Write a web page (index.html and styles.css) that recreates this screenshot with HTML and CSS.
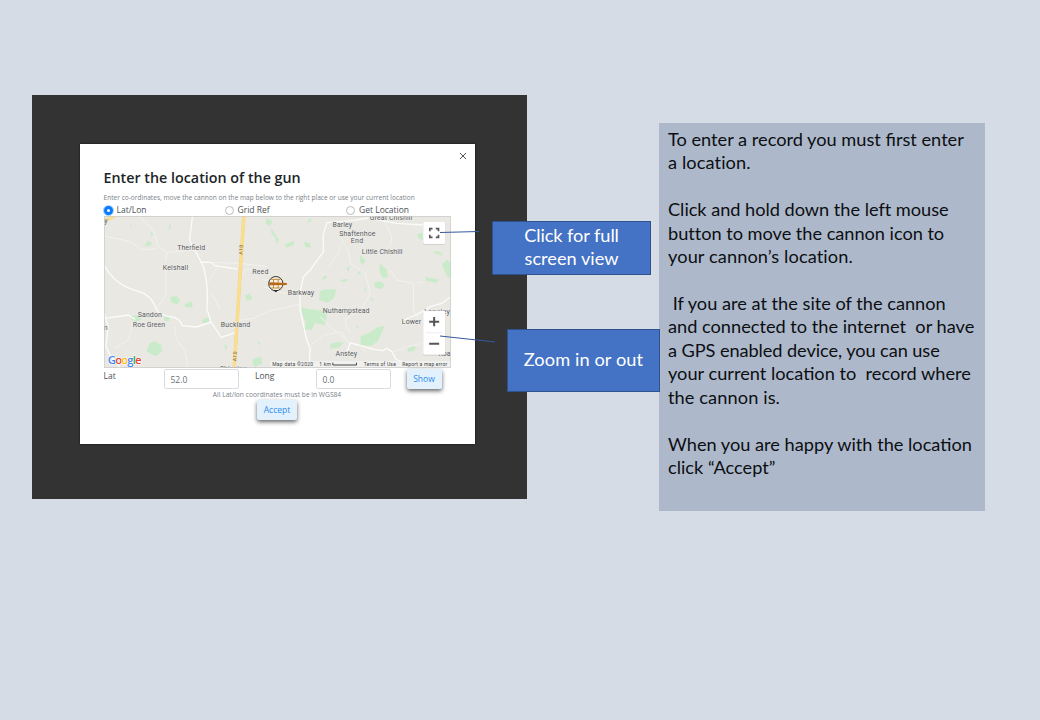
FILE: index.html
```html
<!DOCTYPE html>
<html lang="en">
<head>
<meta charset="utf-8">
<title>Enter the location of the gun</title>
<link rel="stylesheet" href="styles.css">
</head>
<body>
<main class="slide">
  <section class="backdrop">
    <div class="dialog">
      <svg class="close" viewBox="0 0 8 8"><path d="M1 1 7 7M7 1 1 7"/></svg>
      <h1 class="title">Enter the location of the gun</h1>
      <p class="hint">Enter co-ordinates, move the cannon on the map below to the right place or use your current location</p>
      <div class="modes">
        <label class="mode"><i class="radio radio-on"></i><span>Lat/Lon</span></label>
        <label class="mode"><i class="radio"></i><span>Grid Ref</span></label>
        <label class="mode"><i class="radio"></i><span>Get Location</span></label>
      </div>
      <svg class="map" viewBox="252 408 1040 456">
        <rect class="land" x="252" y="408" width="1040" height="456"/>
        <g class="woods">
          <path d="M845 682 870 688 921 694 917 735 884 729 875 750 849 749 858 729 846 703Z"/>
          <path d="M1074 741 1094 737 1072 785 1052 798 1020 795 1022 768 1048 758Z"/>
          <path d="M899 634 915 628 949 628 941 655 922 668 897 660Z"/>
          <path d="M389 790 402 783 423 794 426 813 409 828 394 823 380 815 383 801Z"/>
          <path d="M450 651 469 647 480 661 472 673 454 668ZM494 673 516 664 517 683 494 680Z"/>
          <path d="M675 648 688 640 697 656 680 663ZM548 718 568 711 571 721 555 732 546 727Z"/>
          <path d="M697 838 723 830 727 850 705 860 698 853ZM612 792 622 798 616 813ZM713 784 720 787 717 799Z"/>
          <path d="M740 415 757 422 749 438 735 430ZM753 443 762 458 776 478 772 495 764 470 754 461ZM795 492 822 482 820 496 798 503Z"/>
          <path d="M868 413 875 422 862 430ZM851 486 870 489 872 503 855 500ZM908 591 917 586 920 595 907 600Z"/>
          <path d="M1021 525 1036 542 1026 554 1018 542ZM1078 550 1099 568 1103 590 1088 595 1078 574ZM1061 610 1079 603 1094 615 1084 628 1065 622Z"/>
          <path d="M979 565 990 557 984 575ZM1010 583 1025 567 1019 583ZM1032 632 1037 619 1039 632ZM956 600 987 597 972 607Z"/>
          <path d="M1216 591 1257 599 1248 608 1218 603ZM1266 555 1280 539 1292 550 1292 595 1280 588ZM1239 513 1260 516 1268 527 1243 520ZM1190 463 1206 458 1209 480 1196 476Z"/>
          <path d="M930 792 950 786 971 788 955 804 930 806ZM1161 805 1185 797 1185 810 1165 817ZM1010 737 1016 742 1008 747Z"/>
          <path d="M430 709 450 713 446 723 434 724ZM331 709 350 706 365 718 340 729ZM383 483 397 489 390 497 373 499Z"/>
          <path d="M447 430 453 441 446 451ZM391 455 400 463 394 470ZM331 434 335 438 328 441ZM1050 654 1058 655 1057 668Z"/>
        </g>
        <g class="lanes">
          <path d="M355 408 398 448 415 500 440 517 520 510M440 517 437 545"/>
          <path d="M437 570 438 645 405 690M253 468 330 485 365 510 410 506"/>
          <path d="M463 740 468 775 495 815 503 864M340 720 325 780 282 805"/>
          <path d="M550 547 660 550 740 560M592 560 565 605M665 584 680 568 700 568M600 690 575 640"/>
          <path d="M725 600 760 600M650 722 700 715 750 692 835 674"/>
          <path d="M844 635 790 640 730 620M960 470 985 512 990 550 1035 580 1050 640 1025 685 975 720M925 560 955 520 960 500"/>
          <path d="M1085 410 1115 470 1110 500M1110 570 1130 600 1180 610 1180 690 1195 715"/>
          <path d="M873 795 910 765 965 755 985 790M900 710 935 745 985 785M978 710 975 730 990 760"/>
          <path d="M1120 815 1200 790M1040 820 1020 800M1190 610 1209 605"/>
        </g>
        <g class="roads">
          <path d="M253 558C275 595 300 617 345 631C388 640 399 665 410 690C416 700 430 708 456 711Q479 714 486 737L529 741 574 726"/>
          <path d="M517 408 508 480Q530 522 550 560Q566 620 560 685L571 723 592 755 603 772 645 758"/>
          <path d="M540 546 575 548 583 557 651 567M253 715 325 705 345 718"/>
          <path d="M252 700 264 740 257 800 270 826 300 864"/>
          <path d="M1045 414 1000 421 920 428 909 465 910 515 870 570 850 590 839 640 840 690 850 735 858 775 870 805 867 864"/>
          <path d="M1055 416 1130 430 1210 435M982 813 990 789 1020 796 1060 808 1088 812 1100 805 1115 815 1128 838 1180 858"/>
          <path d="M1150 720 1190 704 1230 680 1265 670 1292 650"/>
        </g>
        <path class="trunk-edge" d="M671 408 642 864M253 423 283 408"/>
        <path class="trunk" d="M671 408 642 864M253 423 283 408"/>
        <g class="places">
          <text x="471" y="509" textLength="84">Therfield</text>
          <text x="428" y="569" textLength="76">Kelshall</text>
          <text x="696" y="581" textLength="49">Reed</text>
          <text x="803" y="646" textLength="79">Barkway</text>
          <text x="353" y="711" textLength="72">Sandon</text>
          <text x="338" y="742" textLength="97">Roe Green</text>
          <text x="602" y="741" textLength="88">Buckland</text>
          <text x="937" y="440" textLength="59">Barley</text>
          <text x="957" y="469" textLength="109">Shaftenhoe</text>
          <text x="992" y="490" textLength="37">End</text>
          <text x="1025" y="521" textLength="122">Little Chishill</text>
          <text x="1049" y="419" textLength="127">Great Chishill</text>
          <text x="908" y="698" textLength="140">Nuthampstead</text>
          <text x="946" y="829" textLength="65">Anstey</text>
          <text x="1145" y="732" textLength="58">Lower</text>
          <text x="1212" y="703" textLength="77">Langley</text>
          <text x="1255" y="829">Roa</text>
          <text x="598" y="873" textLength="82">Chipping</text>
          <text x="252" y="430">y</text>
          <text x="251" y="751">n</text>
        </g>
        <g class="road-no">
          <text transform="translate(666 524) rotate(-86)" textLength="29">A10</text>
          <text transform="translate(648 844) rotate(-86)" textLength="29">A10</text>
        </g>
        <g class="cannon">
          <circle cx="767" cy="611" r="21.500"/>
          <path class="tip" d="M760 631 767 637 774 631Z"/>
          <path class="wheel" d="M753 598H781M753 624H781M760 598V624M774 598V624"/>
          <path class="barrel" d="M747 607 800 609V615L747 616Z"/>
        </g>
        <rect class="legal" x="750" y="843" width="542" height="20"/>
        <g class="legal-text">
          <text x="756" y="857" textLength="123">Map data ©2020</text>
          <text x="897" y="857" textLength="35">1 km</text>
          <text x="1031" y="857" textLength="96">Terms of Use</text>
          <text x="1146" y="857" textLength="135">Report a map error</text>
          <path d="M938 848V855H1009V848"/>
        </g>
        <text class="google" x="263" y="851" textLength="101"><tspan class="g-blue">G</tspan><tspan class="g-red">o</tspan><tspan class="g-yellow">o</tspan><tspan class="g-blue">g</tspan><tspan class="g-green">l</tspan><tspan class="g-red">e</tspan></text>
        <g class="controls">
          <rect x="1209" y="426" width="66" height="66" rx="4"/>
          <path class="corners" d="M1229 454V446H1237M1247 446H1255V454M1255 464V472H1247M1237 472H1229V464"/>
          <rect x="1209" y="692" width="66" height="132" rx="4"/>
          <path class="rule" d="M1217 758H1267"/>
          <path class="sign" d="M1227 725H1257M1242 711V739M1227 791H1257"/>
        </g>
        <rect class="frame" x="253" y="409" width="1038" height="454"/>
      </svg>
      <div class="coords">
        <span class="coord-label">Lat</span><span class="field">52.0</span>
        <span class="coord-label">Long</span><span class="field">0.0</span>
        <span class="btn btn-show">Show</span>
      </div>
      <p class="note">All Lat/lon coordinates must be in WGS84</p>
      <span class="btn btn-accept">Accept</span>
    </div>
  </section>
  <aside class="notes">
    <p>To enter a record you must first enter<br><span class="loose">a location.</span></p>
    <p><span class="snug">Click and hold down the left mouse</span><br><span class="snug">button to move the cannon icon to</span><br><span class="loose">your cannon’s location.</span></p>
    <p><span> If you are at the site of the cannon</span><br><span>and connected to the internet  or have</span><br><span class="tight">a GPS enabled device, you can use</span><br><span>your current location to  record where</span><br><span class="loose">the cannon is.</span></p>
    <p>When you are happy with the location<br>click “Accept”</p>
  </aside>
  <svg class="leaders" viewBox="0 0 1040 720"><path d="M440 232.500 479 231.500M440 336 495 342"/></svg>
  <div class="callout callout-full"><span class="tight">Click for full</span><span>screen view</span></div>
  <div class="callout callout-zoom"><span class="loose">Zoom in or out</span></div>
</main>
</body>
</html>
```
FILE: styles.css
```css
* { box-sizing: border-box; }
body { margin: 0; background: #d6dce5; }
p, h1 { margin: 0; }

.slide {
  position: relative;
  display: flex;
  align-items: flex-start;
  width: 1040px;
  height: 720px;
  overflow: hidden;
  background: #d6dce5;
}

.backdrop {
  width: 495px;
  height: 404px;
  margin: 95px 0 0 32px;
  padding: 49px 52.500px 55px 48px;
  background: #333;
}
.dialog {
  position: relative;
  display: flex;
  flex-direction: column;
  height: 299.500px;
  padding: 25px 24px 0 23.500px;
  background: #fff;
  box-shadow: 0 0 2px #111;
  color: #4c5157;
  font-family: "Open Sans", "Noto Sans", sans-serif;
  font-size: 8.500px;
  white-space: nowrap;
}
.close {
  position: absolute;
  top: 8px;
  right: 8px;
  width: 8px;
  height: 8px;
  fill: none;
  stroke: #555;
}
.title { height: 20px; color: #212529; font-size: 14.300px; font-weight: 600; line-height: 18px; }
.hint { height: 15px; color: #7b838a; font-size: 6.590px; line-height: 17px; }
.modes { display: grid; grid-template-columns: 121px 121.500px 1fr; height: 12px; }
.mode { display: flex; align-items: center; gap: 4px; line-height: 12px; }
.radio { width: 9px; height: 9px; border: 1px solid #b5bbc1; border-radius: 50%; background: #fff; }
.radio-on { border: 3px solid #0b7bff; box-shadow: 0 0 0 1px #a8d1ff; }

.map { display: block; flex: none; width: 347px; height: 152px; font-family: Roboto, sans-serif; }
.land { fill: #e9e8e3; }
.woods { fill: #c9ebca; }
.lanes { fill: none; stroke: #f2f2ef; stroke-width: 3; }
.roads { fill: none; stroke: #fbfbfa; stroke-width: 4; stroke-linejoin: round; }
.trunk { fill: none; stroke: #fbdf8e; stroke-width: 8; }
.trunk-edge { fill: none; stroke: #f3d27c; stroke-width: 10; }
.places { fill: #55585c; stroke: #f3f2ef; stroke-width: 2; paint-order: stroke; font-size: 21px; }
.road-no { fill: #6d5b2b; font-size: 15px; }
.cannon circle { fill: #f3efe4; stroke: #3a352c; stroke-width: 3; }
.tip { fill: #222; }
.wheel { fill: none; stroke: #c28a3c; stroke-width: 3; }
.barrel { fill: #b86a16; }
.legal { fill: #f3f3f1; opacity: .8; }
.legal-text { fill: #444; font-size: 15px; }
.legal-text path { fill: none; stroke: #444; stroke-width: 3; }
.google { font: 600 34px "Open Sans", sans-serif; stroke: #fff; stroke-width: 3; paint-order: stroke; }
.g-blue { fill: #4285f4; }
.g-red { fill: #ea4335; }
.g-yellow { fill: #fbbc05; }
.g-green { fill: #34a853; }
.controls rect { fill: #fff; filter: drop-shadow(0 1px 2px #0004); }
.corners { fill: none; stroke: #555; stroke-width: 5; }
.sign { fill: none; stroke: #555; stroke-width: 6; }
.rule { stroke: #e6e6e6; stroke-width: 2; }
.frame { fill: none; stroke: #c8c8c6; stroke-width: 2; }

.coords {
  display: grid;
  grid-template-columns: 60px 91.500px 60.500px 91px 1fr;
  align-items: start;
  height: 21px;
  padding-top: 1px;
}
.coord-label { line-height: 13px; }
.field {
  width: 75px;
  height: 20px;
  padding-left: 6px;
  border: 1px solid #d8dce1;
  border-radius: 2px;
  color: #6a7077;
  line-height: 19px;
}
.btn {
  border-radius: 2px;
  background: #e3f1fd;
  box-shadow: 0 2px 4px #0009;
  color: #2b8cf0;
  line-height: 20px;
  text-align: center;
}
.btn-show { width: 35px; height: 20px; }
.btn-accept { align-self: center; width: 40px; height: 20px; }
.note { height: 11px; color: #7b838a; font-size: 6.680px; line-height: 12px; text-align: center; }

.notes {
  width: 326px;
  height: 388px;
  margin: 123px 0 0 132px;
  padding: 5px 9px;
  background: #adb9ca;
  color: #0c0e12;
  font: 18.200px/23.430px Lato, sans-serif;
  white-space: nowrap;
}
.notes p + p { margin-top: 23.430px; }
.notes span { white-space: pre; }
.snug { letter-spacing: -.03px; }
.tight { letter-spacing: -.08px; }
.loose { letter-spacing: .1px; }

.leaders { position: absolute; inset: 0; width: 1040px; height: 720px; fill: none; stroke: #34599c; }
.callout {
  position: absolute;
  display: flex;
  flex-direction: column;
  align-items: center;
  justify-content: center;
  padding-bottom: 1.500px;
  border: 1px solid #2f528f;
  background: #4472c4;
  color: #fff;
  font: 18.200px/23.500px Lato, sans-serif;
  white-space: nowrap;
}
.callout-full { left: 492px; top: 221px; width: 159px; height: 54px; }
.callout-zoom { left: 507px; top: 329px; width: 153px; height: 63px; }
```
